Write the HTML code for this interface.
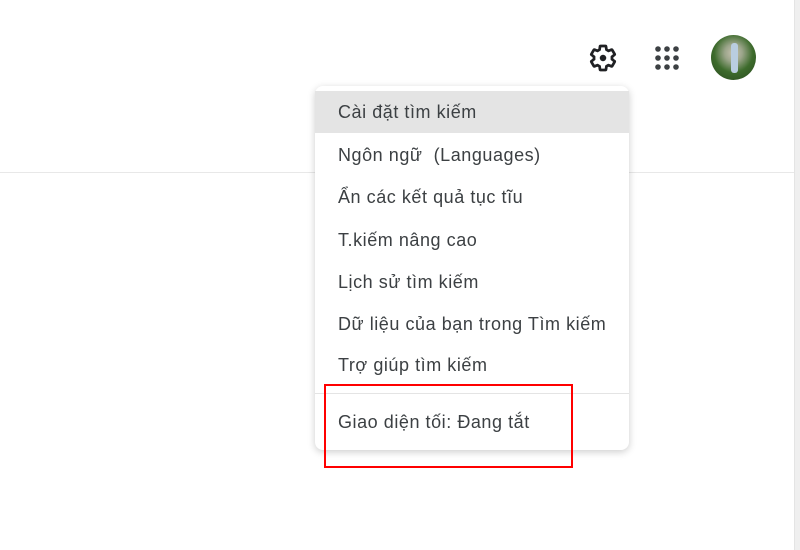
<!DOCTYPE html>
<html><head><meta charset="utf-8"><style>
body{margin:0;width:800px;height:550px;background:#fff;position:relative;overflow:hidden;font-family:"Liberation Sans",Arial,sans-serif}
.hl{position:absolute;left:0;top:172px;width:795px;height:1px;background:#e8e8e8}
.sb{position:absolute;right:0;top:0;width:5px;height:550px;background:#efefef;border-left:1px solid #e4e4e4}
.menu{position:absolute;left:315px;top:86px;width:314px;height:364px;background:#fff;border-radius:8px;box-shadow:0 2px 8px rgba(0,0,0,.2)}
.it{position:absolute;left:0;width:314px;height:42px;line-height:42px;padding-left:23px;box-sizing:border-box;font-size:18px;letter-spacing:0.55px;color:#3c4043;white-space:nowrap}
.sel{background:#e4e4e4}
.sep{position:absolute;left:0;top:307px;width:314px;height:1px;background:#e4e4e4}
.red{position:absolute;left:324px;top:384px;width:245px;height:80px;border:2px solid #f00}
</style></head><body>
<div class="hl"></div>
<div class="sb"></div>
<svg style="position:absolute;left:588px;top:43px" width="30" height="30" viewBox="0 0 24 24"><path fill="none" stroke="#202124" stroke-width="2.2" stroke-linejoin="round" d="M19.14 12.94c.04-.3.06-.61.06-.94 0-.32-.02-.64-.07-.94l2.03-1.58a.49.49 0 0 0 .12-.61l-1.92-3.32a.49.49 0 0 0-.59-.22l-2.39.96c-.5-.38-1.03-.7-1.62-.94l-.36-2.54a.48.48 0 0 0-.48-.41h-3.84c-.24 0-.43.17-.47.41l-.36 2.54c-.59.24-1.130.57-1.62.94l-2.39-.96a.49.49 0 0 0-.59.22L2.74 8.87c-.12.21-.08.47.12.61l2.030 1.58c-.05.3-.09.63-.09.94s.02.64.07.94l-2.03 1.58a.49.49 0 0 0-.12.61l1.92 3.32c.12.22.37.29.59.22l2.39-.96c.5.38 1.03.7 1.62.94l.36 2.54c.05.24.24.41.48.41h3.840c.24 0 .44-.17.47-.41l.36-2.54c.59-.24 1.13-.56 1.62-.94l2.39.96c.22.08.47 0 .59-.22l1.92-3.32c.12-.22.07-.47-.12-.61l-2.01-1.580z"/><circle cx="12" cy="12" r="2.6" fill="#202124"/></svg>
<svg style="position:absolute;left:654px;top:45px" width="26" height="26" viewBox="0 0 26 26" fill="#3c4043"><circle cx="4" cy="4" r="2.8"/><circle cx="13" cy="4" r="2.8"/><circle cx="22" cy="4" r="2.8"/><circle cx="4" cy="13" r="2.8"/><circle cx="13" cy="13" r="2.8"/><circle cx="22" cy="13" r="2.8"/><circle cx="4" cy="22" r="2.8"/><circle cx="13" cy="22" r="2.8"/><circle cx="22" cy="22" r="2.8"/></svg>
<div style="position:absolute;left:711px;top:35px;width:45px;height:45px;border-radius:50%;background:radial-gradient(circle at 50% 40%,#c9c3b2 0,#9ba58a 25%,#3d6b2c 55%,#27461d 100%);overflow:hidden"><div style="position:absolute;left:20px;top:8px;width:7px;height:30px;background:#b9cde0;border-radius:3px"></div></div>
<div class="menu">
<div class="it sel" style="top:5px">Cài đặt tìm kiếm</div>
<div class="it" style="top:48px">Ngôn ngữ&nbsp; (Languages)</div>
<div class="it" style="top:90px">Ẩn các kết quả tục tĩu</div>
<div class="it" style="top:133px">T.kiếm nâng cao</div>
<div class="it" style="top:175px">Lịch sử tìm kiếm</div>
<div class="it" style="top:217px">Dữ liệu của bạn trong Tìm kiếm</div>
<div class="it" style="top:258px">Trợ giúp tìm kiếm</div>
<div class="sep"></div>
<div class="it" style="top:315px">Giao diện tối: Đang tắt</div>
</div>
<div class="red"></div>
</body></html>
